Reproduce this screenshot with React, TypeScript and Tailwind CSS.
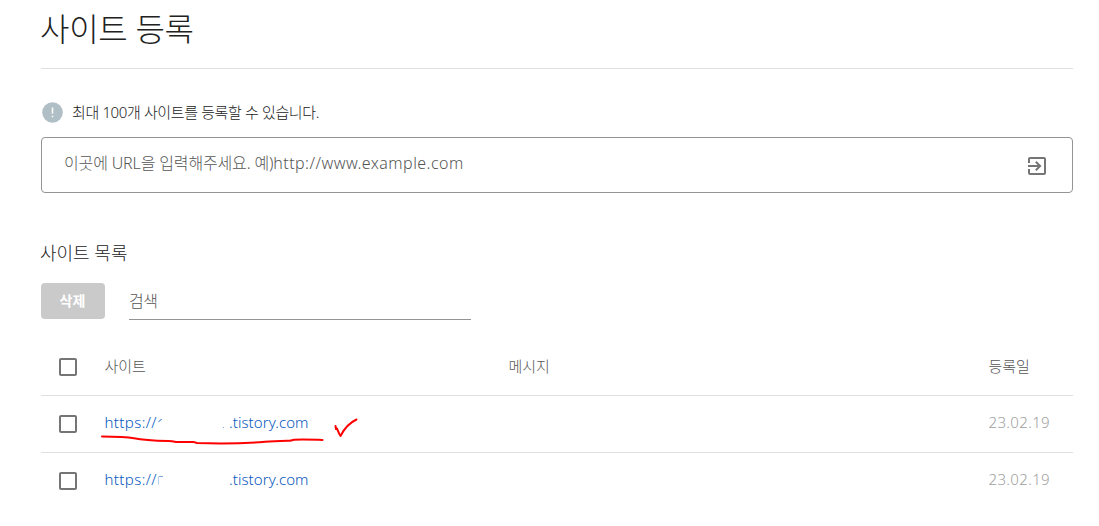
import { MdExitToApp, MdOutlineCheckBoxOutlineBlank } from "react-icons/md"

const sites = [
  { id: 1, head: "https://", rest: ".tistory.com", date: "23.02.19", marked: true },
  { id: 2, head: "https://", rest: ".tistory.com", date: "23.02.19", marked: false },
]

function InfoIcon() {
  return (
    <svg className="h-[21px] w-[21px]" viewBox="0 0 21 21">
      <circle cx="10.5" cy="10.5" r="10.3" fill="#b0bec5" />
      <path d="M10.5 5.5v6.2M10.5 13.7v1.6" stroke="#fff" strokeWidth="1.5" fill="none" />
    </svg>
  )
}

function Checkbox() {
  return (
    <button className="ml-[15.4px] flex h-6 w-6 items-center justify-center text-[#757575]" aria-label="선택">
      <MdOutlineCheckBoxOutlineBlank className="h-6 w-6" />
    </button>
  )
}

// Hand drawn underline and check mark over the first row
function Marks() {
  return (
    <svg
      className="pointer-events-none absolute top-0 left-[55px] h-14 w-[270px]"
      viewBox="96 396 270 56"
      fill="none"
      stroke="#ff0000"
      strokeWidth="2"
      strokeLinecap="round"
      strokeLinejoin="round"
    >
      <path d="M102 436.5C114 436.5 125 436.5 134 438.2C146 440.7 158 440.8 172 441.2L176 442.1L194 442.1L197 443C222 443.8 244 443.4 265 441.8C274 441.2 283 441 290 440.8L294 439.8C301 439.2 310 439.6 322.5 440" />
      <path d="M335.5 426L336 429L337 428.5C338 431 339 434 340.5 436C344 429 349 423 356.5 419.5" />
    </svg>
  )
}

function RemainsFirst() {
  return (
    <svg className="h-5 w-[71px]" viewBox="0 0 71 20" fill="none">
      <path d="M0.5 10.1L2 8.2L3.8 7.5" stroke="#3577c8" strokeWidth="1" />
      <path d="M65 15.5h1" stroke="#8ab0de" strokeWidth="1" />
    </svg>
  )
}

function RemainsSecond() {
  return (
    <svg className="h-5 w-[71px]" viewBox="0 0 71 20" fill="none">
      <path d="M0.5 15.5V7.5" stroke="#b9d0ed" strokeWidth="1" />
      <path d="M1 7.5h4" stroke="#79a5db" strokeWidth="1" />
    </svg>
  )
}

export default function App() {
  return (
    <div className="h-[526px] w-[1099px] overflow-hidden bg-white pl-[41px] font-['Noto_Sans','Noto_Sans_CJK_KR',sans-serif] font-light text-[#212121]">
      <main className="w-[1032px]">
        <header className="h-[69px] border-b border-[#e0e0e0]">
          <h1 className="-ml-px pt-[5px] text-[32px] leading-[48px] font-light tracking-[-0.3px]">사이트 등록</h1>
        </header>

        <div className="mt-[33px] flex h-[21px] items-center gap-[9px] pl-px">
          <InfoIcon />
          <p className="pb-0.5 text-[15px] leading-5 tracking-[-0.37px] text-[#212121]">최대 100개 사이트를 등록할 수 있습니다.</p>
        </div>

        <div className="mt-[14px] flex h-14 items-center justify-between rounded border border-[#949494] pr-[23px] pl-[22px]">
          <span className="pb-1 text-base leading-6 tracking-[-0.15px] text-[#555]">
            이곳에 URL을 입력해주세요. 예)<span className="tracking-[0.45px]">http://www.example.com</span>
          </span>
          <MdExitToApp className="mt-0.5 h-6 w-6 text-[#757575]" />
        </div>

        <h2 className="mt-[46px] -ml-px text-[18px] leading-7 font-light">사이트 목록</h2>
        <div className="mt-4 flex h-[37px] gap-6">
          <button className="h-9 w-16 rounded bg-[#cacaca] pr-px pb-px text-sm font-bold text-white">삭제</button>
          <div className="w-[342px] border-b border-[#949494] pt-1.5 text-base leading-6 tracking-[-0.5px] text-[#555]">검색</div>
        </div>

        <section className="mt-[19px]">
          <div className="grid h-[57px] grid-cols-[63.5px_404px_480px_84.5px] items-center border-b border-[#e0e0e0] text-[15px] leading-5 text-[#555]">
            <Checkbox />
            <span className="pb-0.5">사이트</span>
            <span className="pb-0.5">메시지</span>
            <span className="pb-0.5">등록일</span>
          </div>
          {sites.map((site) => (
            <div
              key={site.id}
              className={`relative grid h-[57px] grid-cols-[63.5px_404px_480px_84.5px] items-center border-b text-[15px] leading-5 ${site.marked ? "border-[#e0e0e0]" : "border-transparent"}`}
            >
              <Checkbox />
              <a className="flex items-center pb-1 text-[#0757bd]">
                <span className="w-[53.5px] tracking-[0.4px]">{site.head}</span>
                {site.marked ? <RemainsFirst /> : <RemainsSecond />}
                <span className="tracking-[0.08px]">{site.rest}</span>
              </a>
              <span />
              <span className="pb-1 tracking-[0.35px] text-[#a0a0a0]">{site.date}</span>
              {site.marked && <Marks />}
            </div>
          ))}
        </section>
      </main>
    </div>
  )
}
